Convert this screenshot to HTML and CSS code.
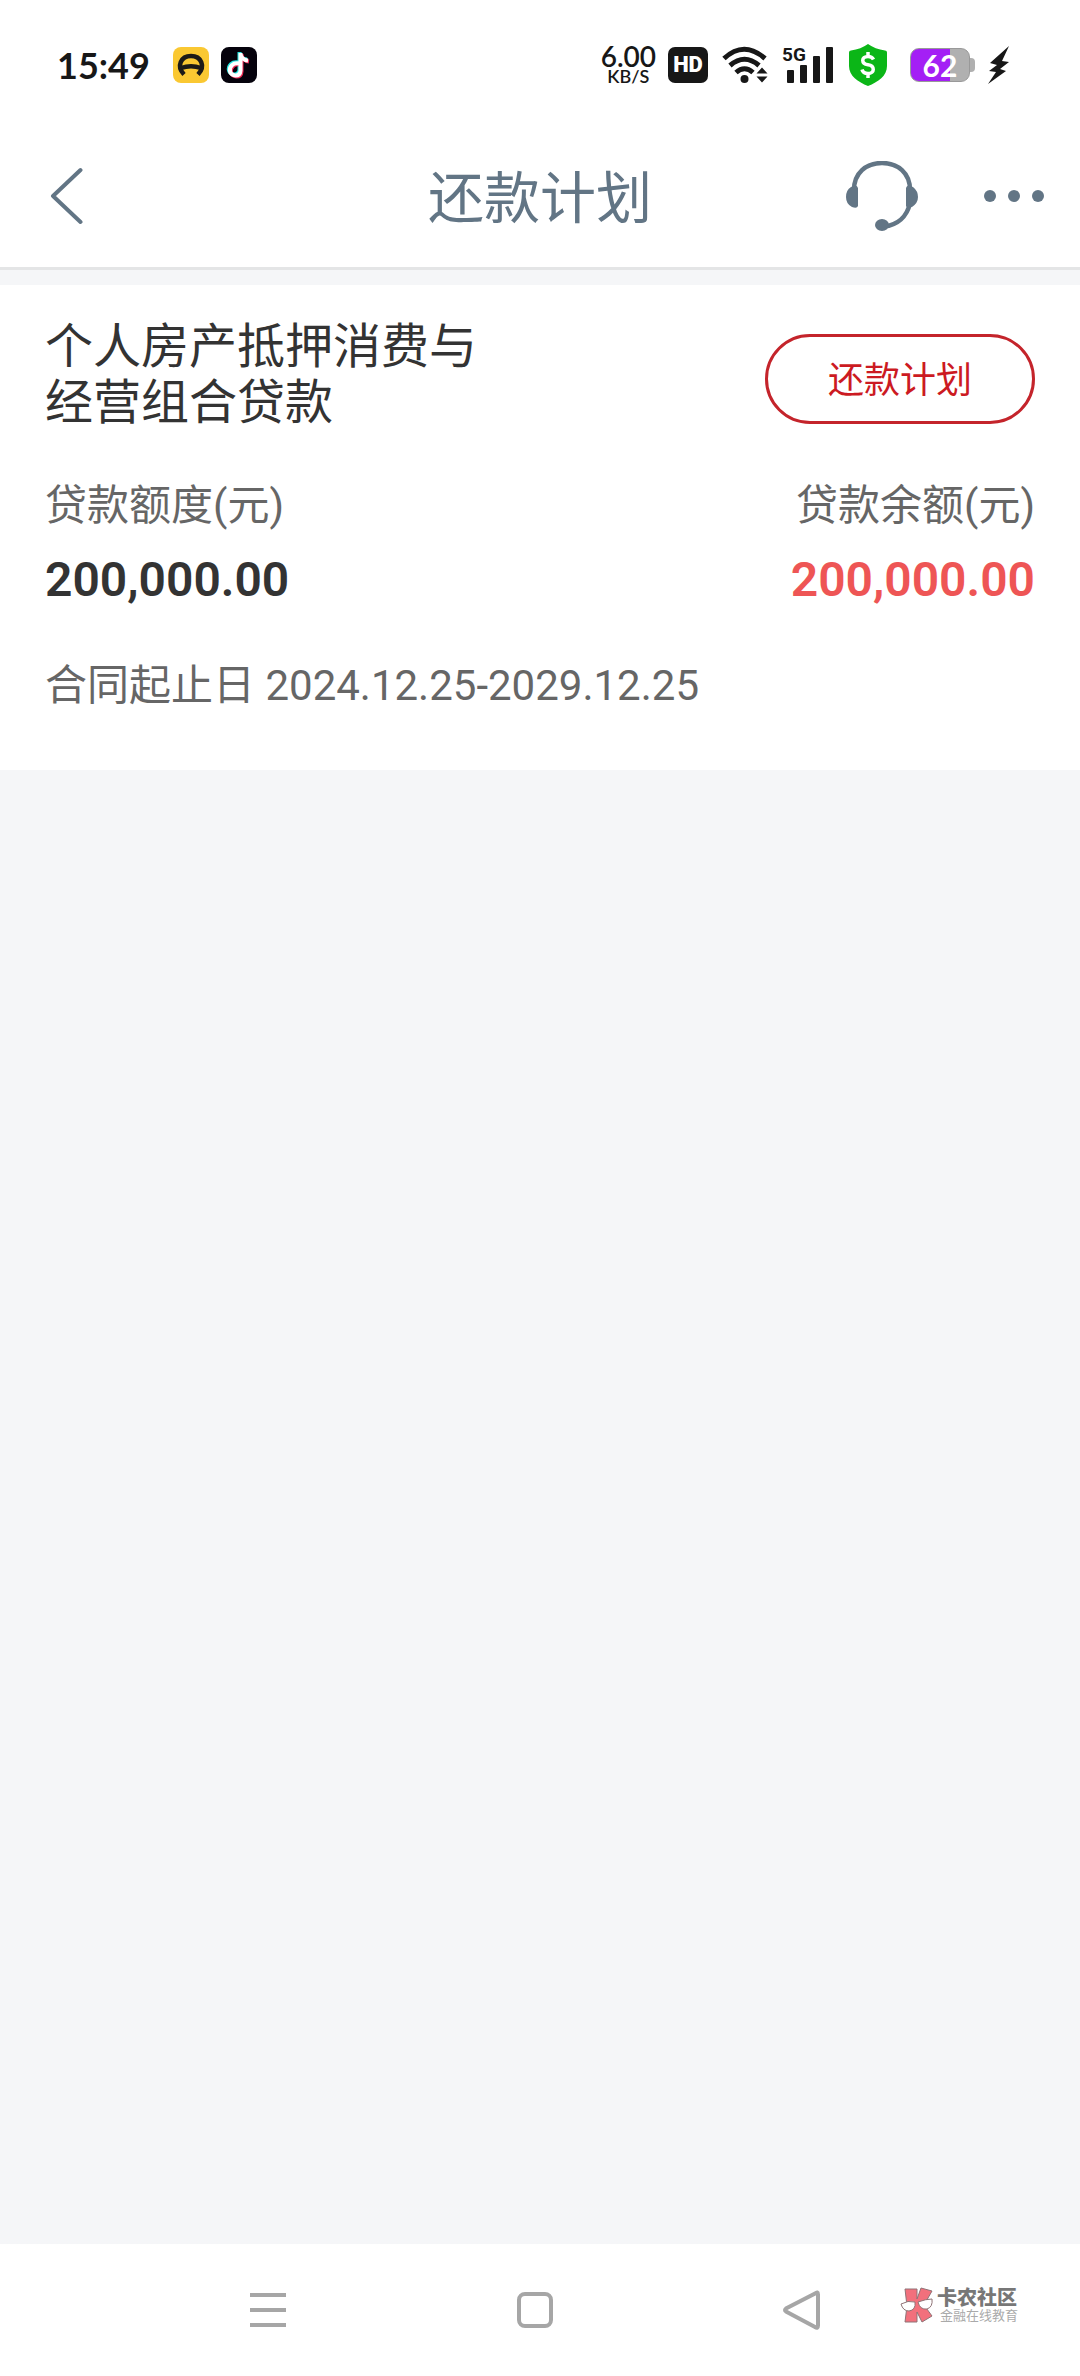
FILE: index.html
```html
<!DOCTYPE html>
<html lang="zh-CN">
<head>
<meta charset="UTF-8" />
<meta name="viewport" content="width=device-width, initial-scale=1" />
<title>还款计划</title>
<link rel="stylesheet" href="styles.css">
</head>
<body>

<div class="status-bar">
  <div class="status-left">
    <span class="clock">15:49</span>
    <svg class="app-icon" width="36" height="36" viewBox="0 0 36 36">
      <rect width="36" height="36" rx="8" fill="#fac832" />
      <path d="M11 27.500C3 19 8 9 18 9S33 19 25 27.500" fill="none" stroke="#1c1a17" stroke-width="4.500" />
      <path d="M8 21Q18 17.500 28 21" fill="none" stroke="#1c1a17" stroke-width="4.500" />
    </svg>
    <svg class="app-icon" width="36" height="36" viewBox="0 0 36 36">
      <rect width="36" height="36" rx="8" fill="#05020c" />
      <g fill="none" stroke-width="4">
        <path d="M17 15.500c-6-1-10 3-9 8s10 6 10.500-1V5c0 4 3 7 7.500 7.500" stroke="#25e5e0" />
        <path d="M19 17.500c-6-1-10 3-9 8s10 6 10.500-1V7c0 4 3 7 7.500 7.500" stroke="#f22b56" />
        <path d="M18 16.500c-6-1-10 3-9 8s10 6 10.500-1V6c0 4 3 7 7.500 7.500" stroke="#fff" />
      </g>
    </svg>
  </div>
  <div class="status-right">
    <div class="speed"><span class="speed-num">6.00</span><span class="speed-unit">KB/S</span></div>
    <span class="hd">HD</span>
    <svg class="wifi" width="46" height="38" viewBox="0 0 46 38">
      <g fill="none" stroke="#171717" stroke-width="5">
        <path d="M2 12.500Q22 -6 43 12.500" />
        <path d="M8 19.500Q22.500 7 37 19.500" />
        <path d="M14 26.500Q22.500 19 31 26.500" />
      </g>
      <circle cx="22.500" cy="33" r="4" fill="#171717" />
      <path d="M40 21.500l5.500 6h-11zM40 36.500l5.500-6h-11z" fill="#171717" />
    </svg>
    <div class="signal">
      <span class="signal-label">5G</span>
      <svg width="52" height="40" viewBox="0 0 52 40" fill="#171717">
        <rect x="5" y="25" width="7" height="13" rx="1" />
        <rect x="18" y="20" width="7" height="18" rx="1" />
        <rect x="31" y="11" width="7" height="27" rx="1" />
        <rect x="44" y="2" width="7" height="36" rx="1" />
      </svg>
    </div>
    <svg class="shield" width="38" height="42" viewBox="0 0 38 42">
      <path d="M19 0Q26 5 36 6.500q2 0 2 2V22c0 10-9 16-19 20C9 38 0 32 0 22V8.500q0-2 2-2Q12 5 19 0z" fill="#0bb617" />
      <path d="M24.500 15.500Q23 12.500 19 12.500c-7 0-7 7.500 0 8.300s7 8.700 0 8.700q-5 0-6-4M19 8v5M19 29v5" fill="none" stroke="#fff" stroke-width="3.500" />
    </svg>
    <div class="battery"><span class="battery-body">62</span><span class="battery-tip"></span></div>
    <svg width="22" height="38" viewBox="0 0 22 38">
      <path d="M21 0L2 17l7 2-8 6 7 1L0 38l18-13-6-2 9-7-7-1z" fill="#171717" />
    </svg>
  </div>
</div>

<header class="header">
  <button class="icon-btn" type="button" aria-label="返回">
    <svg width="47" height="60" viewBox="0 0 47 60">
      <path d="M44.500 4L17 30l27.500 26" fill="none" stroke="#627585" stroke-width="4" stroke-linecap="round" stroke-linejoin="round" />
    </svg>
  </button>
  <h1 class="title">还款计划</h1>
  <div class="header-actions">
    <button class="icon-btn" type="button" aria-label="客服">
      <svg width="72" height="70" viewBox="0 0 72 70" fill="#627585">
        <path d="M8 29C8 12 20 2 36 2s28 10 28 27M64 42C61 56 51 64 38 65.500" fill="none" stroke="#627585" stroke-width="4.500" />
        <path d="M5 26q6-3 7 1v18q-1 3-6 1-6-3-6-10t5-10zM67 26q-6-3-7 1v18q1 3 6 1 6-4 6-10t-5-10z" />
        <ellipse cx="36" cy="64" rx="7" ry="6" />
      </svg>
    </button>
    <button class="icon-btn" type="button" aria-label="更多">
      <svg width="60" height="12" viewBox="0 0 60 12" fill="#627585">
        <circle cx="6" cy="6" r="6" /><circle cx="30" cy="6" r="6" /><circle cx="54" cy="6" r="6" />
      </svg>
    </button>
  </div>
</header>

<main class="content">
  <section class="loan">
    <div class="loan-head">
      <h2 class="loan-name">个人房产抵押消费与<br>经营组合贷款</h2>
      <button class="plan-btn" type="button">还款计划</button>
    </div>
    <dl class="amounts">
      <div class="amount">
        <dt>贷款额度(元)</dt>
        <dd>200,000.00</dd>
      </div>
      <div class="amount balance">
        <dt>贷款余额(元)</dt>
        <dd>200,000.00</dd>
      </div>
    </dl>
    <p class="term">合同起止日 2024.12.25-2029.12.25</p>
  </section>
</main>

<nav class="nav-bar">
  <button class="icon-btn" type="button" aria-label="最近任务">
    <svg width="40" height="40" viewBox="0 0 40 40" fill="#a6a6a6">
      <rect x="2" y="3" width="36" height="4" /><rect x="2" y="18" width="36" height="4" /><rect x="2" y="33" width="36" height="4" />
    </svg>
  </button>
  <button class="icon-btn" type="button" aria-label="主屏幕">
    <svg width="40" height="40" viewBox="0 0 40 40">
      <rect x="4" y="4" width="32" height="32" rx="6" fill="none" stroke="#a6a6a6" stroke-width="4" />
    </svg>
  </button>
  <button class="icon-btn" type="button" aria-label="返回">
    <svg width="40" height="40" viewBox="0 0 40 40">
      <path d="M33 3.500Q36 1 36 4.500v31q0 3.500-3 1.500L4 21.500q-2-1.500 0-3z" fill="none" stroke="#a6a6a6" stroke-width="4" />
    </svg>
  </button>
  <div class="watermark">
    <svg width="34" height="36" viewBox="0 0 34 36">
      <g stroke="#8f7376" stroke-width="1">
        <path d="M5 2h12v10l4-11 11 3-8 14 8 11-10 6-5-10v10H5l2-16z" fill="#f2707c" />
        <path d="M1 17q7-4 14-2 1 8-6 9-6 0-8-7zM18 15q8-3 14-3 1 8-5 10-7 1-9-7z" fill="#fff" />
      </g>
    </svg>
    <div class="watermark-text">
      <span class="watermark-name">卡农社区</span>
      <span class="watermark-sub">金融在线教育</span>
    </div>
  </div>
</nav>

</body>
</html>
```

FILE: styles.css
```css
* { box-sizing: border-box; margin: 0; padding: 0; }
body { font-family: Roboto, "Noto Sans CJK SC", sans-serif; background: #f5f6f8; color: #333; min-height: 100vh; display: flex; flex-direction: column; }
svg { display: block; flex-shrink: 0; }
button { font: inherit; cursor: pointer; }
.icon-btn { border: 0; background: none; display: block; }

/* status bar */
.status-bar { height: 130px; padding: 0 70px 0 57px; background: #fff; color: #171717; display: flex; justify-content: space-between; align-items: center; font-family: Lato, sans-serif; }
.status-left, .status-right { display: flex; align-items: center; }
.clock { font-size: 36px; font-weight: 700; line-height: 40px; margin-right: 11px; }
.app-icon { margin-left: 12px; }
.speed { display: flex; flex-direction: column; align-items: center; margin-right: 12px; font-weight: 600; }
.speed-num { font-size: 28px; line-height: 22px; }
.speed-unit { font-size: 18px; line-height: 18px; }
.hd { width: 40px; height: 36px; border-radius: 7px; background: #171717; color: #fff; font: 900 22px/36px Roboto, sans-serif; text-align: center; margin-right: 14px; }
.wifi { margin-right: 14px; }
.signal { position: relative; margin-right: 15px; }
.signal-label { position: absolute; left: 0; top: 0; font: 700 19px/20px Roboto, sans-serif; }
.shield { margin-right: 23px; }
.battery { display: flex; align-items: center; margin-right: 13px; }
.battery-body { width: 60px; height: 34px; border-radius: 9px; background: linear-gradient(to right, #a41ff5 68%, #b0b0b0 68%); border: 1px solid #999; color: #fff; font-size: 30px; font-weight: 700; line-height: 32px; text-align: center; }
.battery-tip { width: 5px; height: 14px; border-radius: 0 4px 4px 0; background: #b0b0b0; }

/* page header */
.header { height: 140px; padding: 0 36px 6px; background: #fff; border-bottom: 3px solid #e4e5e6; color: #627585; display: grid; grid-template-columns: 1fr auto 1fr; align-items: center; }
.title { font-size: 56px; font-weight: 400; line-height: 64px; padding-top: 6px; }
.header-actions { display: flex; justify-content: flex-end; align-items: center; gap: 66px; }

/* loan card */
.content { flex: 1; padding-top: 15px; }
.loan { background: #fff; padding: 34px 45px 54px; }
.loan-head { display: flex; justify-content: space-between; align-items: center; }
.loan-name { font-size: 48px; font-weight: 400; line-height: 56px; }
.plan-btn { width: 270px; height: 90px; margin-top: 8px; padding-bottom: 4px; border: 3px solid #c4242b; border-radius: 45px; background: #fff; color: #cc1a22; font-size: 36px; }
.amounts { display: flex; justify-content: space-between; margin-top: 45px; }
.amount dt { font-size: 42px; line-height: 60px; color: #666; }
.amount dd { font-size: 48px; font-weight: 600; line-height: 60px; margin-top: 14px; }
.balance { text-align: right; }
.balance dd { color: #ee5555; }
.term { font-size: 42px; line-height: 60px; color: #666; margin-top: 46px; }

/* system navigation */
.nav-bar { position: relative; height: 132px; padding: 0 145px 0 135px; background: #fff; display: grid; grid-template-columns: repeat(3, 1fr); align-items: center; justify-items: center; }
.watermark { position: absolute; right: 62px; top: 43px; display: flex; gap: 3px; }
.watermark-text { display: flex; flex-direction: column; width: 81px; }
.watermark-name { font-size: 20px; font-weight: 900; line-height: 22px; color: #777; }
.watermark-sub { font-size: 13px; line-height: 14px; color: #aaa; text-align: right; }
```
